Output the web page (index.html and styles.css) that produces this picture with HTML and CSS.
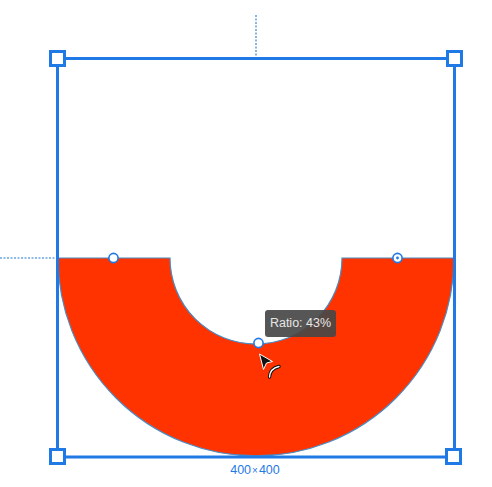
FILE: index.html
```html
<!DOCTYPE html>
<html>
<head>
<meta charset="utf-8">
<link rel="stylesheet" href="styles.css">
</head>
<body>
<div class="canvas">
  <svg class="art" width="492" height="487" viewBox="0 0 492 487">
    <line class="guide" x1="256" y1="15" x2="256" y2="57"/>
    <line class="guide" x1="0" y1="258" x2="57" y2="258"/>
    <path class="donut" d="M 58 258 A 198 198 0 0 0 454 258 L 342 258 A 86 86 0 0 1 170 258 Z"/>
    <rect class="frame" x="57.5" y="58.5" width="397" height="398.5"/>
    <rect class="handle" x="50.5" y="51.5" width="14" height="14"/>
    <rect class="handle" x="447.5" y="51.5" width="14" height="14"/>
    <rect class="handle" x="50.5" y="449.5" width="14" height="14"/>
    <rect class="handle" x="446.5" y="449.5" width="14" height="14"/>
    <circle class="knob" cx="113.5" cy="258" r="4.6"/>
    <circle class="knob" cx="397.5" cy="258" r="4.6"/>
    <circle class="dot" cx="397.5" cy="258" r="1.4"/>
    <circle class="knob" cx="258.5" cy="343" r="4.6"/>
    <polygon class="cursor" points="259.5,354 272.5,361.5 266.5,363 263.5,369.5"/>
    <path class="curl-out" d="M269.5 377 Q270 368.5 279 366.5"/>
    <path class="curl-in" d="M269.5 377 Q270 368.5 279 366.5"/>
  </svg>
  <div class="tip">Ratio: 43%</div>
  <div class="size">400<span class="times">×</span>400</div>
</div>
</body>
</html>
```
FILE: styles.css
```css
html, body {
  margin: 0;
  padding: 0;
  background: #ffffff;
}
.canvas {
  position: relative;
  width: 492px;
  height: 487px;
  overflow: hidden;
  font-family: "Liberation Sans", Arial, sans-serif;
}
.art {
  display: block;
}
.guide {
  stroke: #1a7bd0;
  stroke-width: 1.1;
  stroke-dasharray: 2 1.5;
}
.donut {
  fill: #ff3300;
  stroke: #4a8cc4;
  stroke-width: 1.2;
}
.frame {
  fill: none;
  stroke: #1f7ae6;
  stroke-width: 3;
}
.handle {
  fill: #ffffff;
  stroke: #1f7ae6;
  stroke-width: 3;
}
.knob {
  fill: #ffffff;
  stroke: #1f7ae6;
  stroke-width: 1.6;
}
.dot {
  fill: #1f7ae6;
}
.cursor {
  fill: #111111;
  stroke: #ffffff;
  stroke-width: 1;
  stroke-linejoin: round;
}
.curl-out {
  fill: none;
  stroke: #111111;
  stroke-width: 3.4;
  stroke-linecap: round;
}
.curl-in {
  fill: none;
  stroke: #ffffff;
  stroke-width: 1.4;
  stroke-linecap: round;
}
.tip {
  position: absolute;
  left: 265px;
  top: 310px;
  width: 71px;
  height: 27px;
  box-sizing: border-box;
  border-radius: 3px;
  background: rgba(72, 72, 72, 0.92);
  color: #e6e6e6;
  font-size: 12.5px;
  line-height: 27px;
  text-align: center;
}
.size {
  position: absolute;
  left: 205px;
  top: 462px;
  width: 100px;
  text-align: center;
  color: #1f7ae6;
  font-size: 12.5px;
  line-height: 16px;
}
.times {
  font-size: 10px;
  padding: 0 1px;
}
```
